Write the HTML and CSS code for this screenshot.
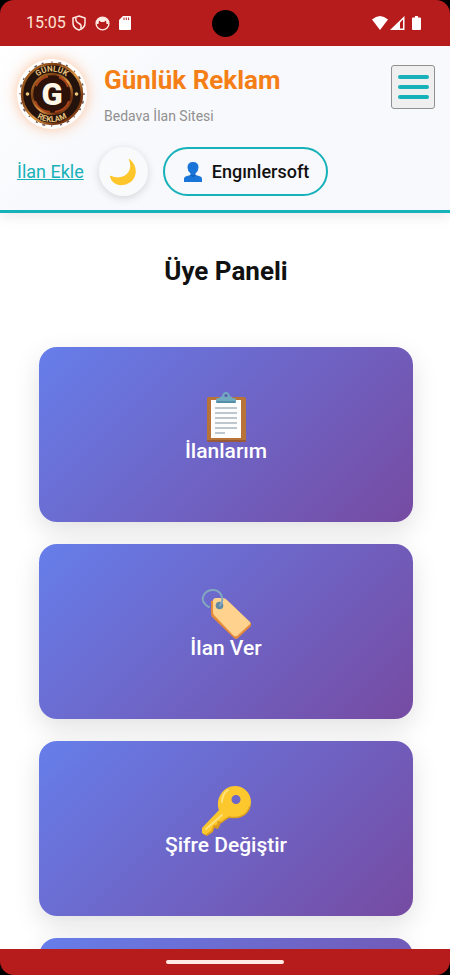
FILE: index.html
```
<!DOCTYPE html>
<html lang="tr">
<head>
    <meta charset="UTF-8">
    <meta name="viewport" content="width=device-width, initial-scale=1">
    <title>Günlük Reklam - Üye Paneli</title>
    <link rel="stylesheet" href="styles.css">
</head>
<body>
	<div class="status-bar">
		<span class="time">15:05</span>
		<div class="status-left">
			<svg width="14" height="16" viewBox="0 0 14 16" fill="none" stroke="#ffece4" stroke-width="1.5"><path d="M7 1L13 3V8C13 11 10.500 13.800 7 15C3.500 13.800 1 11 1 8V3Z"/><path d="M4 2.500C3 6 5 7.500 7 8.500C9 9.500 10 11 8.500 13.500"/></svg>
			<svg width="15" height="15" viewBox="0 0 15 15"><circle cx="7.500" cy="7.500" r="6.400" fill="none" stroke="#ffece4" stroke-width="1.400"/><path d="M1.500 8Q1 1.500 7.500 1.500T13.500 8L11.500 8L11 4.500L9 6H6L4 4.500L3.500 8Z" fill="#ffece4"/></svg>
			<svg width="12" height="14" viewBox="0 0 12 14"><path d="M4 0H11Q12 0 12 1V13Q12 14 11 14H1Q0 14 0 13V4Z" fill="#fff"/><path d="M5 1.500V4M7.300 1.500V4M9.600 1.500V4" stroke="#b71c1c" stroke-width="1"/></svg>
		</div>
		<div class="camera"></div>
		<div class="status-right">
			<svg width="16" height="14" viewBox="0 0 16 14"><path d="M0 3.500Q8-3.500 16 3.500L8 14Z" fill="#fff"/></svg>
			<svg width="15" height="14" viewBox="0 0 15 14"><path d="M0 14L14.500 0V14Z" fill="#fff"/><path d="M10 6.500L13 3.500V12.500H10Z" fill="#b71c1c"/></svg>
			<svg class="battery" width="9" height="14" viewBox="0 0 9 14"><path d="M3 0H6V1.500H8Q9 1.500 9 2.500V13Q9 14 8 14H1Q0 14 0 13V2.500Q0 1.500 1 1.500H3Z" fill="#fff"/></svg>
		</div>
	</div>

	<div class="page">
		<header class="header">
			<div class="header-top">
				<svg class="logo" viewBox="0 0 70 70">
					<defs>
						<linearGradient id="ring" x1="0" y1="0" x2="1" y2="1"><stop offset="0" stop-color="#c9822f"/><stop offset=".3" stop-color="#7a3c12"/><stop offset=".55" stop-color="#e09a45"/><stop offset=".8" stop-color="#6a2c0c"/><stop offset="1" stop-color="#c7752a"/></linearGradient>
						<path id="arc-top" d="M12.500 35A22.500 22.500 0 0 1 57.500 35"/>
						<path id="arc-bottom" d="M7 35A28 28 0 0 0 63 35"/>
					</defs>
					<circle cx="35" cy="35" r="35" fill="#fff"/>
					<circle cx="35" cy="35" r="32" fill="none" stroke="#6b5651" stroke-width="1.500" stroke-dasharray="1 6 3 5 2 8"/>
					<circle cx="35" cy="35" r="30" fill="#24130c" stroke="url(#ring)" stroke-width="2.500"/>
					<circle cx="35" cy="35" r="20" fill="#2c1209" stroke="url(#ring)" stroke-width="2.500"/>
					<path d="M18 42Q22 52 33 53M38 53Q49 51 52 42M19 27Q23 19 31 17.500M42 18Q49 21 51 28" fill="none" stroke="#a8431a" stroke-width="2"/>
					<circle cx="10.500" cy="35" r="1.800" fill="#efc87d"/>
					<circle cx="59.500" cy="35" r="1.800" fill="#efc87d"/>
					<text class="logo-ring"><textPath href="#arc-top" startOffset="50%">GÜNLÜK</textPath></text>
					<text class="logo-ring"><textPath href="#arc-bottom" startOffset="50%">REKLAM</textPath></text>
					<text class="logo-letter" x="35" y="46">G</text>
				</svg>
				<div class="brand">
					<div class="brand-name">Günlük Reklam</div>
					<div class="brand-sub">Bedava İlan Sitesi</div>
				</div>
				<button class="menu-btn" type="button" aria-label="Menü">
					<span></span>
					<span></span>
					<span></span>
				</button>
			</div>
			<div class="header-actions">
				<a class="add-link" href="#">İlan Ekle</a>
				<button class="theme-btn" type="button" aria-label="Tema">
					<svg width="28" height="28" viewBox="0 0 28 28"><path d="M20.500 1C31 9 28 25 14 27C8 28 2 24 1 18.500C1 17.500 2 17.500 2.600 18C14 23 25 14 20 2Q19.600 .5 20.500 1Z" fill="#fec62b"/></svg>
				</button>
				<a class="user-btn" href="#">
					<svg width="18" height="20" viewBox="0 0 18 20"><path d="M0 20V17Q0 14.500 3 14L6.500 13V11.500Q3.500 9 3.500 5.500Q3.500 0 9 0T14.500 5.500Q14.500 9 11.500 11.500V13L15 14Q18 14.500 18 17V20Z" fill="#1976d8"/><path d="M6.500 12.500Q9 14.500 11.500 12.500V13.500Q9 16 6.500 13.500Z" fill="#125cb0"/></svg>
					<span>Engınlersoft</span>
				</a>
			</div>
		</header>

		<main class="panel">
			<h1>Üye Paneli</h1>
			<nav class="cards">
				<a class="card" href="#">
					<svg width="50" height="50" viewBox="0 0 50 50">
						<rect x="6" y="5" width="39" height="45" rx="2" fill="#b87339"/>
						<path d="M6 48H45V50H8Q6 50 6 48Z" fill="#995b35"/>
						<rect x="10" y="8" width="30" height="38" fill="#fdfdfe"/>
						<path d="M14 16H36M14 21H36M14 26H36M14 31H36M14 36H36M14 41H24" stroke="#a9b5bd" stroke-width="1.300"/>
						<path d="M15 11V8Q15 6 18 6L21 4Q22 0 25 0T29 4L32 6Q35 6 35 8V11Z" fill="#71a9c0"/>
						<path d="M16 10H34" stroke="#528ea8" stroke-width="2"/>
						<circle cx="25" cy="3.500" r="1.600" fill="#5b5faa"/>
					</svg>
					<span>İlanlarım</span>
				</a>
				<a class="card" href="#">
					<svg width="50" height="50" viewBox="0 0 50 50">
						<path d="M10 12L20 9L24 10L50 34Q51 35 50 37L37 49Q35 51 33 49L11 28Q10 26 10 24Z" fill="#e48a3b"/>
						<path d="M12 12Q12 9 15 9H22Q24 9 26 11L49 33Q50 35 48 36L36 47Q34 48 32 46L13 26Q12 25 12 23Z" fill="#ffd28e"/>
						<circle cx="18.500" cy="16.500" r="3.800" fill="#6389a4"/>
						<path d="M19 16.500C24 10 20 1 12 1C3 1-1 10 4 15Q5.500 17 8 18" fill="none" stroke="#83a8bf" stroke-width="2" stroke-linecap="round"/>
					</svg>
					<span>İlan Ver</span>
				</a>
				<a class="card" href="#">
					<svg width="50" height="50" viewBox="0 0 50 50">
						<path d="M22 29L2 44V48L6 50L12 46L13 42L17 43L20 37L26 33Z" fill="#d99720"/>
						<path fill-rule="evenodd" d="M18 24C14 13 22 0 34 0C43 0 50 7 50 16C50 27 39 34 28 31L23 34L21 36L17 36V39L13 40L11 45L5 49L1 47V42ZM35 9A4.500 4.500 0 1 0 35 18A4.500 4.500 0 0 0 35 9Z" fill="#fdc72e"/>
						<path d="M49 20C46 30 37 33 28 31L23 34L21 36L17 36V39L13 40L11 45L5 49" fill="none" stroke="#dda020" stroke-width="1.500"/>
						<path d="M21 29L5 43M21 16Q21 8 27 4" fill="none" stroke="#ffe27c" stroke-width="2" stroke-linecap="round"/>
					</svg>
					<span>Şifre Değiştir</span>
				</a>
				<a class="card" href="#" aria-label="Çıkış"></a>
			</nav>
		</main>
	</div>

	<div class="gesture-bar"><span></span></div>
</body>
</html>
```
FILE: styles.css
```
* {
    box-sizing: border-box;
}
body {
    display: flex;
    flex-direction: column;
    height: 100vh;
    margin: 0;
    overflow: hidden;
    background: #000;
    color: #111;
    font-family: Roboto, "Noto Sans", sans-serif;
}
svg {
    display: block;
    flex: none;
}
button {
    padding: 0;
    cursor: pointer;
}

/* status bar */
.status-bar {
    display: grid;
    grid-template-columns: 1fr auto 1fr;
    align-items: center;
    flex: none;
    height: 46px;
    padding: 0 26px;
    background: #b71c1c;
    border-radius: 14px 14px 0 0;
}
.time {
    grid-column: 1;
    grid-row: 1;
    color: #ffe4d6;
    font-size: 16px;
    line-height: 20px;
}
.status-left {
    display: flex;
    align-items: center;
    gap: 9px;
    grid-column: 1;
    grid-row: 1;
    padding-left: 46px;
}
.camera {
    grid-column: 2;
    width: 27px;
    height: 27px;
    border-radius: 50%;
    background: #000;
}
.status-right {
    display: flex;
    grid-column: 3;
    justify-content: flex-end;
    gap: 2px;
    padding-right: 3px;
}
.battery {
    margin-left: 5px;
}

/* page */
.page {
    flex: 1;
    min-height: 0;
    overflow: hidden;
    background: #fff;
}
.header {
    padding: 13px 15px 14px 17px;
    background: linear-gradient(135deg, #fff, #f8f9fc 30%);
    border-bottom: 3px solid #17b1b9;
    box-shadow: 0 2px 14px rgba(0, 0, 0, .1);
}
.header-top {
    display: flex;
    align-items: flex-start;
}
.logo {
    width: 70px;
    height: 70px;
    border-radius: 50%;
    box-shadow: 0 0 14px rgba(255, 140, 60, .5);
}
.logo-ring {
    fill: #e6c07c;
    font-size: 8px;
    font-weight: 700;
    text-anchor: middle;
}
.logo-letter {
    fill: #fff6e6;
    font-size: 31px;
    font-weight: 900;
    text-anchor: middle;
}
.brand {
    flex: 1;
    padding: 5px 0 0 17px;
}
.brand-name {
    color: #f57f17;
    font-size: 26px;
    font-weight: 700;
    line-height: 32px;
}
.brand-sub {
    margin-top: 12px;
    color: #909090;
    font-size: 14px;
    line-height: 16px;
}
.menu-btn {
    display: flex;
    flex-direction: column;
    align-items: center;
    justify-content: center;
    gap: 6px;
    width: 44px;
    height: 44px;
    margin-top: 6px;
    background: #efefef;
    border: 1px solid #909090;
    border-radius: 3px;
}
.menu-btn span {
    width: 31px;
    height: 4px;
    border-radius: 2px;
    background: #17b1b9;
}
.header-actions {
    display: flex;
    align-items: center;
    gap: 15px;
    margin-top: 18px;
}
.add-link {
    color: #17b1b9;
    font-size: 18px;
}
.theme-btn {
    display: flex;
    align-items: center;
    justify-content: center;
    width: 49px;
    height: 49px;
    background: #f9fafb;
    border: 0;
    border-radius: 50%;
    box-shadow: 0 2px 8px rgba(0, 0, 0, .15);
}
.user-btn {
    display: flex;
    align-items: center;
    gap: 10px;
    height: 49px;
    padding: 0 17px 0 19px;
    border: 2px solid #17b1b9;
    border-radius: 25px;
    color: #111;
    font-size: 18px;
    font-weight: 500;
    text-decoration: none;
}

/* member panel */
.panel {
    padding: 42px 37px 0 39px;
}
h1 {
    margin: 0 0 60px;
    font-size: 26px;
    font-weight: 700;
    line-height: 32px;
    text-align: center;
}
.cards {
    display: grid;
    gap: 22px;
}
.card {
    display: flex;
    flex-direction: column;
    align-items: center;
    min-height: 175px;
    padding: 45px 20px;
    background: linear-gradient(135deg, #667eea, #764ba2);
    border-radius: 18px;
    box-shadow: 0 9px 27px rgba(0, 0, 0, .12);
    color: #fff;
    font-size: 21px;
    font-weight: 500;
    line-height: 18px;
    text-decoration: none;
}

/* gesture bar */
.gesture-bar {
    display: flex;
    align-items: center;
    justify-content: center;
    flex: none;
    height: 26px;
    background: #b71c1c;
    border-radius: 0 0 14px 14px;
}
.gesture-bar span {
    width: 118px;
    height: 4px;
    border-radius: 2px;
    background: #ffe9e4;
}
```
